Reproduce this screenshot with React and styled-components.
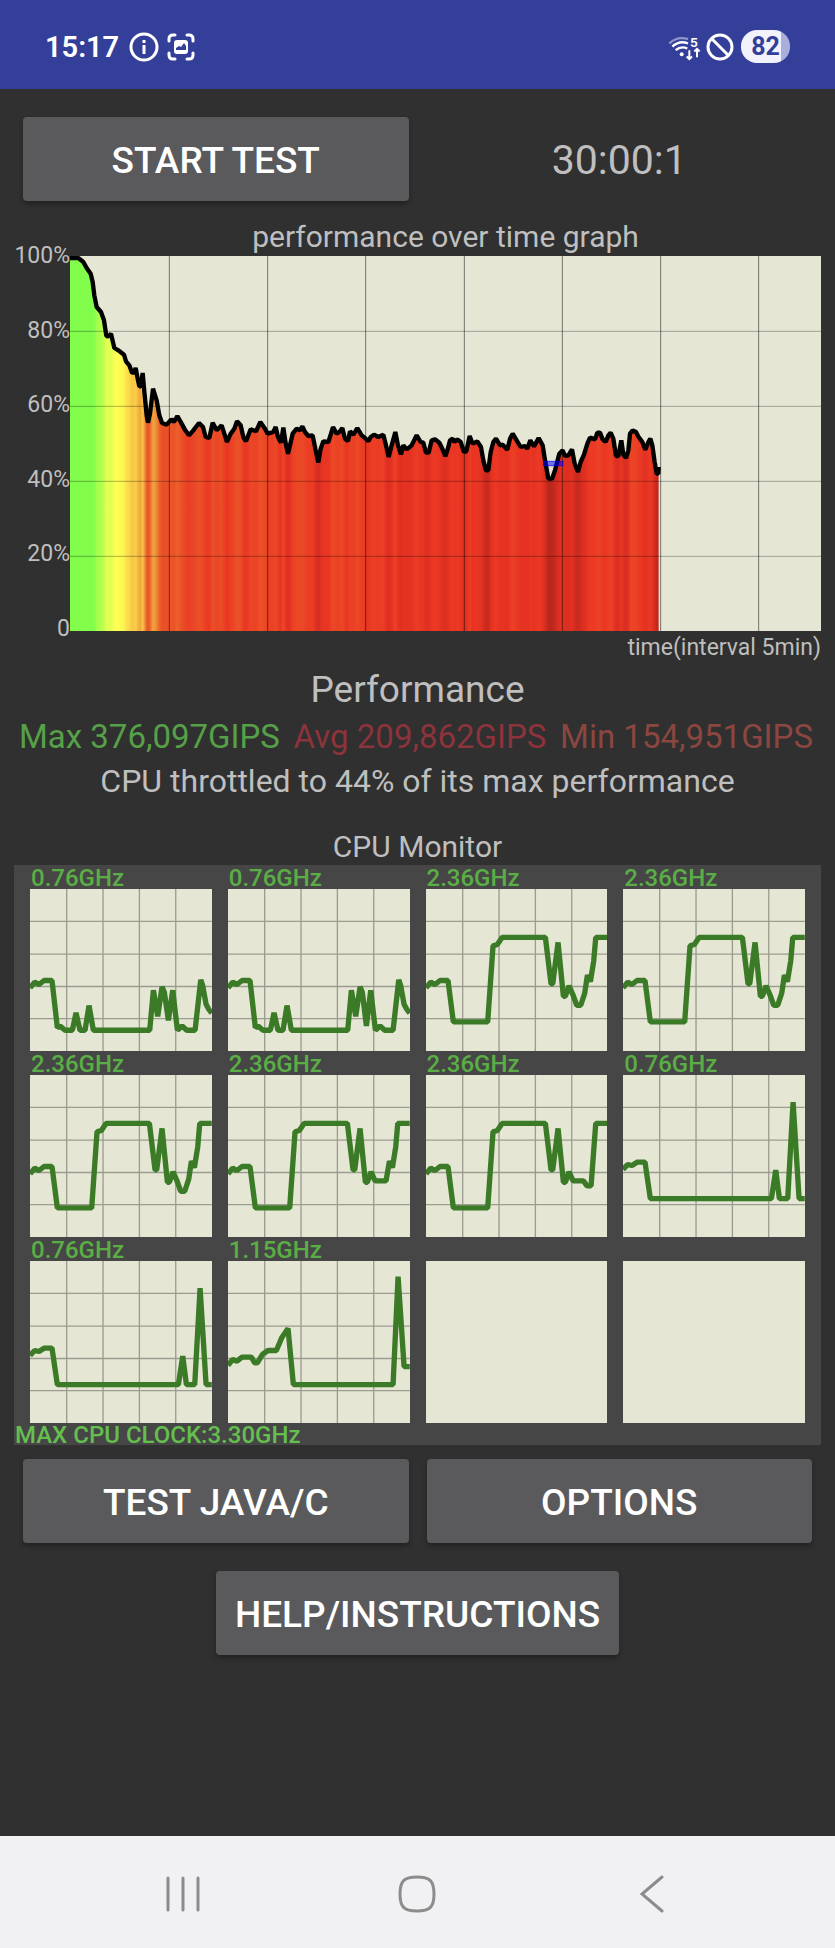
import React, { Component } from 'react'
import styled, { createGlobalStyle } from 'styled-components';


const GlobalStyle = createGlobalStyle`
  body {
    margin: 0;
    background-color: #303030;
    font-family: Roboto, "Liberation Sans", sans-serif;
  }
`;

const Page = styled.div`
  display: flex;
  flex-direction: column;
  min-height: 100vh;
  color: #bfbfbf;
`;

const StatusBar = styled.header`
  display: flex;
  align-items: center;
  justify-content: space-between;
  height: 89px;
  padding: 4px 45px 0;
  box-sizing: border-box;
  background-color: #343f99;
  color: white;
`;

const StatusGroup = styled.div`
  display: flex;
  align-items: center;
  gap: ${props => props.$gap};
`;

const Clock = styled.span`
  font-size: 29px;
  font-weight: 600;
  margin-right: 2px;
`;

const Battery = styled.span`
  width: 49px;
  height: 33px;
  margin-left: 4px;
  border-radius: 16px;
  background: linear-gradient(to right, #f1f2fb 40px, #a9aedb 40px);
  color: #343f99;
  font-size: 25px;
  font-weight: 700;
  line-height: 33px;
  text-align: center;
`;

const Content = styled.main`
  flex: 1;
  padding: 28px 14px;
`;

const ButtonRow = styled.div`
  display: flex;
  align-items: center;
  justify-content: center;
  gap: 18px;
  padding: 0 9px;
  margin-top: ${props => props.$top || '0'};
`;

const Button = styled.button`
  flex: ${props => (props.$fit ? 'none' : '1 1 0')};
  height: 84px;
  padding: 2px 19px 0;
  border: none;
  border-radius: 4px;
  background-color: #5a5a5c;
  box-shadow: 0 3px 5px rgba(0, 0, 0, 0.3);
  color: white;
  font-family: inherit;
  font-size: 37px;
  font-weight: 500;
  cursor: pointer;
`;

const Timer = styled.div`
  flex: 1 1 0;
  padding: 2px 19px 0;
  font-size: 41px;
  text-align: center;
`;

const ChartTitle = styled.h2`
  margin: 18px 0 1px 56px;
  font-size: 30px;
  font-weight: 400;
  line-height: 36px;
  text-align: center;
`;

const ChartBox = styled.div`
  display: grid;
  grid-template-columns: 56px 1fr;
  height: 375px;
`;

const AxisLabels = styled.div`
  display: flex;
  flex-direction: column;
  justify-content: space-between;
  align-items: flex-end;
  margin: -12px 0 -10px;
  font-size: 23px;
  line-height: 24px;
`;

const ChartSvg = styled.svg`
  display: block;
  width: 100%;
  height: 375px;
  background-color: #e5e6d4;
`;

const TimeLabel = styled.div`
  font-size: 23px;
  line-height: 34px;
  text-align: right;
`;

const ResultTitle = styled.h2`
  margin: 3px 0;
  font-size: 37px;
  font-weight: 400;
  line-height: 44px;
  text-align: center;
`;

const Stats = styled.div`
  display: flex;
  justify-content: space-between;
  padding: 0 8px 0 5px;
  font-size: 33px;
  line-height: 44px;
`;

const Stat = styled.span`
  color: ${props => props.color};
`;

const Summary = styled.p`
  margin: 0;
  font-size: 32px;
  line-height: 44px;
  text-align: center;
`;

const MonitorTitle = styled.h2`
  margin: 26px 0 0;
  font-size: 30px;
  font-weight: 400;
  line-height: 36px;
  text-align: center;
`;

const Monitor = styled.section`
  padding-top: 1px;
  background-color: #464646;
`;

const CoreGrid = styled.div`
  display: grid;
  grid-template-columns: repeat(4, 1fr);
  gap: 1px 16px;
  padding: 0 16px;
`;

const CoreLabel = styled.div`
  height: 23px;
  padding-left: 1px;
  color: #5bae46;
  font-size: 24px;
  font-weight: 500;
  line-height: 24px;
`;

const CoreSvg = styled.svg`
  display: block;
  width: 100%;
  height: 162px;
  background-color: #e5e6d4;
`;

const MaxClock = styled.div`
  height: 22px;
  padding-left: 1px;
  color: #64bf4e;
  font-size: 24px;
  font-weight: 500;
  line-height: 24px;
`;

const NavBar = styled.nav`
  display: flex;
  height: 112px;
  padding: 0 66px;
  background-color: #f1f1f3;
`;

const NavButton = styled.button`
  flex: 1;
  display: flex;
  align-items: center;
  justify-content: center;
  padding: 3px 0 0;
  border: none;
  background: none;
  cursor: pointer;
`;


// x runs over 2253 units, y over 1125 units (100% is 0, 0% is 1125)
const CHART_WIDTH = 2253;
const CHART_HEIGHT = 1125;

const samples = [
  [0, 6], [25, 6], [40, 18], [50, 36], [62, 53], [68, 78], [73, 118], [80, 153], [93, 168], [102, 193],
  [109, 240], [116, 241], [123, 233], [133, 276], [145, 283], [162, 296], [168, 316], [178, 328], [186, 350],
  [192, 350], [197, 336], [203, 368], [208, 391], [212, 391], [218, 351], [224, 418], [230, 478], [234, 500],
  [240, 473], [249, 398], [260, 433], [268, 478], [276, 501], [290, 506], [304, 490], [312, 498], [322, 480],
  [335, 503], [346, 523], [357, 538], [370, 523], [387, 501], [399, 513], [407, 543], [418, 546], [428, 500],
  [440, 523], [455, 508], [471, 558], [482, 533], [493, 518], [501, 496], [512, 508], [520, 543], [528, 556],
  [542, 520], [558, 526], [571, 498], [585, 518], [593, 533], [610, 528], [617, 513], [624, 543], [633, 560],
  [640, 515], [648, 568], [654, 593], [660, 568], [668, 533], [680, 518], [690, 523], [697, 511], [705, 528],
  [715, 540], [728, 538], [736, 578], [745, 620], [752, 578], [760, 556], [775, 558], [783, 533], [789, 513],
  [800, 533], [808, 528], [817, 516], [825, 548], [834, 555], [840, 526], [850, 536], [862, 516], [875, 538],
  [885, 546], [895, 556], [902, 543], [912, 536], [925, 543], [940, 536], [948, 568], [956, 603], [965, 568],
  [976, 528], [984, 568], [993, 595], [1000, 568], [1010, 580], [1025, 568], [1040, 538], [1052, 558],
  [1060, 560], [1068, 590], [1076, 590], [1085, 553], [1095, 550], [1108, 560], [1117, 578], [1126, 601],
  [1135, 573], [1140, 553], [1148, 548], [1153, 558], [1162, 550], [1172, 558], [1182, 588], [1189, 586],
  [1199, 540], [1208, 563], [1222, 556], [1233, 573], [1240, 613], [1248, 643], [1255, 643], [1262, 588],
  [1270, 558], [1278, 548], [1290, 568], [1298, 566], [1312, 581], [1320, 548], [1328, 533], [1340, 553],
  [1352, 573], [1365, 570], [1372, 578], [1381, 553], [1392, 571], [1406, 546], [1418, 568], [1426, 618],
  [1435, 668], [1446, 668], [1455, 643], [1468, 593], [1478, 583], [1485, 600], [1495, 598], [1506, 580],
  [1514, 623], [1524, 648], [1532, 618], [1542, 596], [1552, 563], [1560, 545], [1575, 550], [1582, 530],
  [1590, 530], [1598, 550], [1607, 558], [1615, 538], [1622, 530], [1630, 548], [1638, 600], [1645, 600],
  [1654, 553], [1660, 596], [1668, 606], [1675, 583], [1680, 533], [1688, 523], [1698, 528], [1706, 543],
  [1717, 558], [1726, 581], [1735, 558], [1741, 548], [1747, 568], [1754, 618], [1760, 653], [1765, 653],
  [1766, 633],
];

// percent -> fill colour
const heat = [
  [40, [184, 38, 26]],
  [44, [208, 44, 31]],
  [50, [233, 51, 35]],
  [53, [235, 66, 37]],
  [56, [234, 84, 40]],
  [64, [240, 160, 60]],
  [70, [248, 208, 72]],
  [75, [254, 255, 84]],
  [80, [216, 255, 80]],
  [85, [176, 255, 78]],
  [90, [130, 253, 76]],
  [100, [130, 253, 76]],
];

const heatColor = (y) => {
  const percent = 100 - (y / CHART_HEIGHT) * 100;
  let i = 1;
  while (i < heat.length - 1 && heat[i][0] < percent) i++;
  const [p0, c0] = heat[i - 1];
  const [p1, c1] = heat[i];
  const t = (percent - p0) / (p1 - p0);
  const rgb = c0.map((c, k) => Math.round(c + (c1[k] - c) * t));
  return `rgb(${rgb.join(',')})`;
}

const toPoints = list => list.map(p => p.join(',')).join(' ');

const low = '0,283 14,268 27,271 42,261 66,261 82,370 445,370 458,285 469,370 494,370 510,81 528,370 545,370';
const little = '0,296 14,279 27,286 42,274 66,274 82,415 90,410 105,423 127,423 138,371 150,423 165,423 177,349 190,423 359,423 370,303 383,381 396,293 403,310';
const littleEnd = '428,303 442,423 456,410 470,423 495,423 512,272 518,290 528,345 536,360 545,372';
const big = '0,296 14,279 27,286 42,274 66,274 82,398 185,398 201,170 214,166 228,145 358,145 375,284 380,284 396,160 412,321 418,321 429,290';
const bigEnd = '440,315 452,348 464,348 476,312 484,258 493,277 503,215 509,145 545,145';

const cores = [
  { clock: '0.76GHz', points: `${little} 415,393 ${littleEnd}` },
  { clock: '0.76GHz', points: `${little} 415,410 ${littleEnd}` },
  { clock: '2.36GHz', points: `${big} ${bigEnd}` },
  { clock: '2.36GHz', points: `${big} ${bigEnd}` },
  { clock: '2.36GHz', points: `${big} ${bigEnd}` },
  { clock: '2.36GHz', points: `${big} 441,317 474,317 484,258 493,277 503,215 509,145 545,145` },
  { clock: '2.36GHz', points: `${big} 441,317 472,317 483,332 495,332 509,145 545,145` },
  { clock: '0.76GHz', points: low },
  { clock: '0.76GHz', points: low },
  { clock: '1.15GHz', points: '0,312 14,295 27,300 42,288 70,288 80,305 88,305 103,280 120,268 145,268 162,228 180,202 196,370 495,370 510,47 528,316 545,316' },
  {},
  {},
];


const PerformanceChart = () => (
  <ChartSvg viewBox={`0 0 ${CHART_WIDTH} ${CHART_HEIGHT}`} preserveAspectRatio="none" aria-label="performance over time">
    <defs>
      <linearGradient id="heat" gradientUnits="userSpaceOnUse" x1="0" y1="0" x2="1766" y2="0">
        {samples.map(([x, y]) => <stop key={x} offset={x / 1766} stopColor={heatColor(y)} />)}
      </linearGradient>
    </defs>
    <polygon points={`0,1125 ${toPoints(samples)} 1766,1125`} fill="url(#heat)" />
    <polyline points={toPoints(samples)} fill="none" stroke="black" strokeWidth="13" strokeLinejoin="bevel" />
    {[1, 2, 3, 4].map(i => (
      <line key={i} x1="0" x2={CHART_WIDTH} y1={i * 225 + 1} y2={i * 225 + 1} stroke="black" strokeOpacity="0.3" strokeWidth="3" />
    ))}
    {[298, 593, 887, 1183, 1477, 1772, 2066].map(x => (
      <line key={x} x1={x} x2={x} y1="0" y2={CHART_HEIGHT} stroke="black" strokeOpacity="0.5" strokeWidth="3" />
    ))}
    <rect x="1421" y="616" width="58" height="13" fill="#0000ff" fillOpacity="0.5" stroke="#0000ff" strokeOpacity="0.7" strokeWidth="3" />
  </ChartSvg>
)

const Core = ({ clock, points }) => (
  <div>
    <CoreLabel>{clock}</CoreLabel>
    <CoreSvg viewBox="0 0 545 485" preserveAspectRatio="none">
      {points && (
        <>
          <path d="M110 0V485M219 0V485M328 0V485M437 0V485M0 97H545M0 195H545M0 292H545M0 388H545" stroke="black" strokeOpacity="0.32" strokeWidth="4" />
          <polyline points={points} fill="none" stroke="#3b7a26" strokeWidth="16" strokeLinejoin="bevel" />
        </>
      )}
    </CoreSvg>
  </div>
)

const InfoIcon = () => (
  <svg width="30" height="30" viewBox="0 0 30 30" fill="none" stroke="white" strokeWidth="3">
    <circle cx="15" cy="15" r="13" />
    <path d="M15 13V22M15 8V11" />
  </svg>
)

const CaptureIcon = () => (
  <svg width="28" height="28" viewBox="0 0 28 28" fill="none" stroke="white" strokeWidth="3">
    <path d="M2 8V6Q2 2 6 2H8M20 2H22Q26 2 26 6V8M26 20V22Q26 26 22 26H20M8 26H6Q2 26 2 22V20" strokeLinecap="round" />
    <rect x="7" y="7" width="14" height="14" rx="3" fill="white" stroke="none" />
    <path d="M9 17V15L12 13L14 14L17 10L19 13V17Z" fill="#343f99" stroke="none" />
  </svg>
)

const WifiIcon = () => (
  <svg width="35" height="32" viewBox="85 60 105 95" fill="none" stroke="white" strokeWidth="7">
    <path d="M89 97Q113 74 145 84" strokeOpacity="0.45" />
    <path d="M98 106Q121 86 145 97M108 117Q124 103 143 112" />
    <circle cx="126" cy="129" r="6" fill="white" stroke="none" />
    <path d="M149 117V143M141 136L149 144L157 136M172 138V113M164 121L172 113L180 121" strokeWidth="6" />
    <text x="151" y="108" fill="white" stroke="none" fontSize="41" fontWeight="600">5</text>
  </svg>
)

const BlockIcon = () => (
  <svg width="28" height="28" viewBox="0 0 28 28" fill="none" stroke="white" strokeWidth="3">
    <circle cx="14" cy="14" r="12" />
    <path d="M6 6L22 22" />
  </svg>
)


class App extends Component {
  render() {
    return (
      <Page>
        <GlobalStyle />
        <StatusBar>
          <StatusGroup $gap="8px">
            <Clock>15:17</Clock>
            <InfoIcon />
            <CaptureIcon />
          </StatusGroup>
          <StatusGroup $gap="3px">
            <WifiIcon />
            <BlockIcon />
            <Battery>82</Battery>
          </StatusGroup>
        </StatusBar>

        <Content>
          <ButtonRow>
            <Button type="button">START TEST</Button>
            <Timer>30:00:1</Timer>
          </ButtonRow>

          <ChartTitle>performance over time graph</ChartTitle>
          <ChartBox>
            <AxisLabels>
              {['100%', '80%', '60%', '40%', '20%', '0'].map(label => <span key={label}>{label}</span>)}
            </AxisLabels>
            <PerformanceChart />
          </ChartBox>
          <TimeLabel>time(interval 5min)</TimeLabel>

          <ResultTitle>Performance</ResultTitle>
          <Stats>
            <Stat color="#56a048">Max 376,097GIPS</Stat>
            <Stat color="#8c333b">Avg 209,862GIPS</Stat>
            <Stat color="#8b4640">Min 154,951GIPS</Stat>
          </Stats>
          <Summary>CPU throttled to 44% of its max performance</Summary>

          <MonitorTitle>CPU Monitor</MonitorTitle>
          <Monitor>
            <CoreGrid>
              {cores.map((core, i) => <Core key={i} {...core} />)}
            </CoreGrid>
            <MaxClock>MAX CPU CLOCK:3.30GHz</MaxClock>
          </Monitor>

          <ButtonRow $top="14px">
            <Button type="button">TEST JAVA/C</Button>
            <Button type="button">OPTIONS</Button>
          </ButtonRow>
          <ButtonRow $top="28px">
            <Button type="button" $fit>HELP/INSTRUCTIONS</Button>
          </ButtonRow>
        </Content>

        <NavBar>
          <NavButton type="button" aria-label="Recent apps">
            <svg width="38" height="38" viewBox="0 0 38 38" stroke="#8c8c8c" strokeWidth="3" strokeLinecap="round">
              <path d="M4 3V35M19 3V35M34 3V35" />
            </svg>
          </NavButton>
          <NavButton type="button" aria-label="Home">
            <svg width="38" height="38" viewBox="0 0 38 38" fill="none" stroke="#8c8c8c" strokeWidth="3">
              <path d="M19 2C32 2 36 6 36 19C36 32 32 36 19 36C6 36 2 32 2 19C2 6 6 2 19 2Z" />
            </svg>
          </NavButton>
          <NavButton type="button" aria-label="Back">
            <svg width="38" height="38" viewBox="0 0 38 38" fill="none" stroke="#8c8c8c" strokeWidth="3" strokeLinecap="round">
              <path d="M29 2L9 19L29 36" />
            </svg>
          </NavButton>
        </NavBar>
      </Page>
    )
  }
}

export default App
